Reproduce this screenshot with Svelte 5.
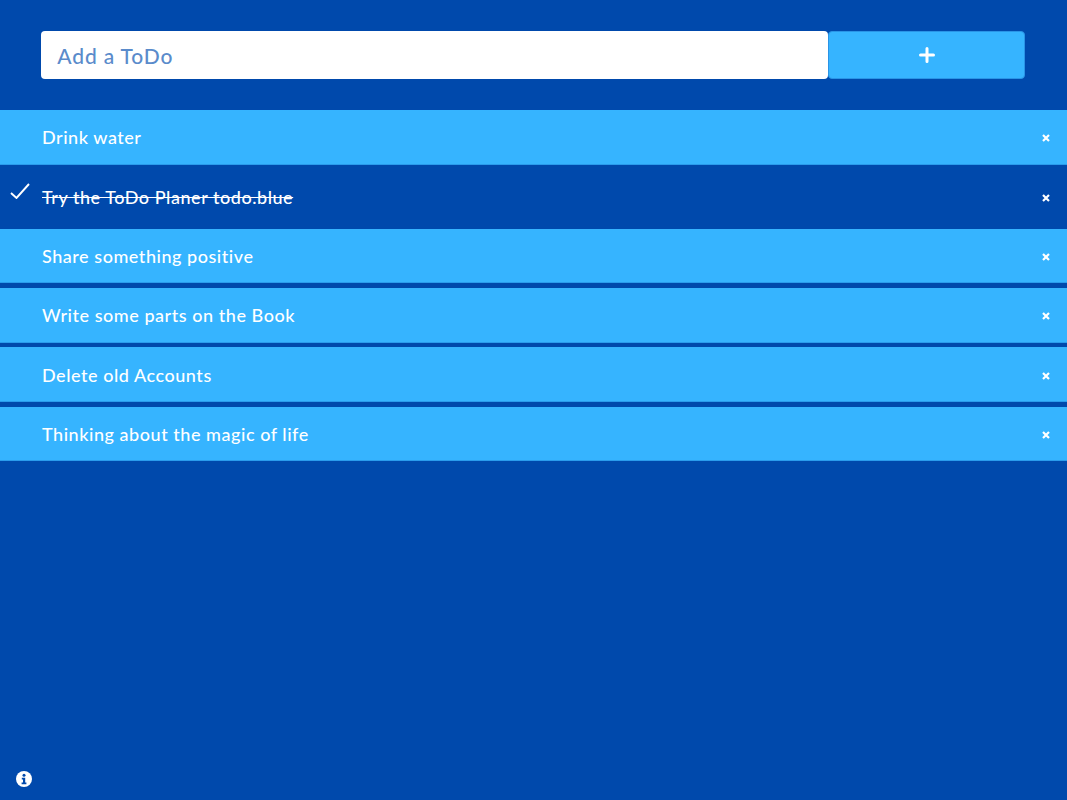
<script>
	let todos = [
		{ text: 'Drink water', done: false },
		{ text: 'Try the ToDo Planer todo.blue', done: true },
		{ text: 'Share something positive', done: false },
		{ text: 'Write some parts on the Book', done: false },
		{ text: 'Delete old Accounts', done: false },
		{ text: 'Thinking about the magic of life', done: false }
	];
</script>

<div class="page">
	<form class="add-form">
		<input class="add-input" type="text" placeholder="Add a ToDo" />
		<button class="add-btn" type="button" aria-label="Add">
			<svg viewBox="0 0 16 16" width="16" height="16">
				<path d="M8 1.5v13M1.5 8h13" fill="none" stroke="currentColor" stroke-width="3" stroke-linecap="round" />
			</svg>
		</button>
	</form>

	<ul class="list">
		{#each todos as todo}
			<li class="item" class:done={todo.done}>
				{#if todo.done}
					<svg class="check" viewBox="0 0 20 16" width="20" height="16">
						<path d="M1 10l5.5 5L19 1" fill="none" stroke="currentColor" stroke-width="1.9" />
					</svg>
				{/if}
				<span class="label">{todo.text}</span>
				<svg class="remove" viewBox="0 0 8 8" width="8" height="8">
					<path d="M1 1l6 6M7 1L1 7" fill="none" stroke="currentColor" stroke-width="2.2" />
				</svg>
			</li>
		{/each}
	</ul>

	<button class="info" type="button" aria-label="Info">
		<svg viewBox="0 0 16 16" width="16" height="16">
			<circle cx="8" cy="8" r="8" fill="#fff" />
			<circle cx="8" cy="4.2" r="1.5" fill="#0049ac" />
			<path d="M5.8 6.8h3.4v4.8h1.2v1.6H5.6v-1.6H7V8.4H5.8z" fill="#0049ac" />
		</svg>
	</button>
</div>

<style>
	:global(body) {
		margin: 0;
		background: #0049ac;
	}

	.page {
		position: relative;
		height: 800px;
		background: #0049ac;
		font-family: 'Lato', 'Open Sans', sans-serif;
		color: #fff;
		overflow: hidden;
	}

	.add-form {
		display: flex;
		padding: 31px 41.7px 31px 41.3px;
		margin: 0;
	}

	.add-input {
		flex: 1;
		min-width: 0;
		height: 48px;
		box-sizing: border-box;
		border: none;
		border-radius: 4px;
		padding: 0 16px;
		font-family: inherit;
		font-size: 21px;
		font-weight: 500;
		letter-spacing: 0.85px;
		background: #fff;
		outline: none;
	}

	.add-input::placeholder {
		color: #5a8bcb;
		opacity: 1;
	}

	.add-btn {
		width: 197px;
		height: 48px;
		box-sizing: border-box;
		display: flex;
		align-items: center;
		justify-content: center;
		background: #36b4ff;
		border: 1px solid #2a94e6;
		border-radius: 4px;
		color: #fff;
		padding: 0;
	}

	.list {
		list-style: none;
		margin: 0;
		padding: 0;
		display: flex;
		flex-direction: column;
		gap: 4.73px;
	}

	.item {
		position: relative;
		display: flex;
		align-items: center;
		justify-content: space-between;
		height: 54.6px;
		box-sizing: border-box;
		padding: 0 17px 0 42px;
		background: #36b4ff;
		border-bottom: 1px solid #2a9cec;
		font-size: 18px;
		font-weight: 500;
		letter-spacing: 0.54px;
	}

	.item.done {
		background: transparent;
		border-bottom-color: transparent;
	}

	.item.done .label {
		text-decoration: line-through;
	}

	.label {
		padding-top: 1px;
	}

	.check {
		position: absolute;
		left: 10px;
		top: 14px;
	}

	.remove {
		display: block;
		margin-top: 3px;
	}

	.info {
		position: absolute;
		left: 16px;
		bottom: 13px;
		width: 16px;
		height: 16px;
		padding: 0;
		border: none;
		background: none;
	}

	.info svg {
		display: block;
	}
</style>
